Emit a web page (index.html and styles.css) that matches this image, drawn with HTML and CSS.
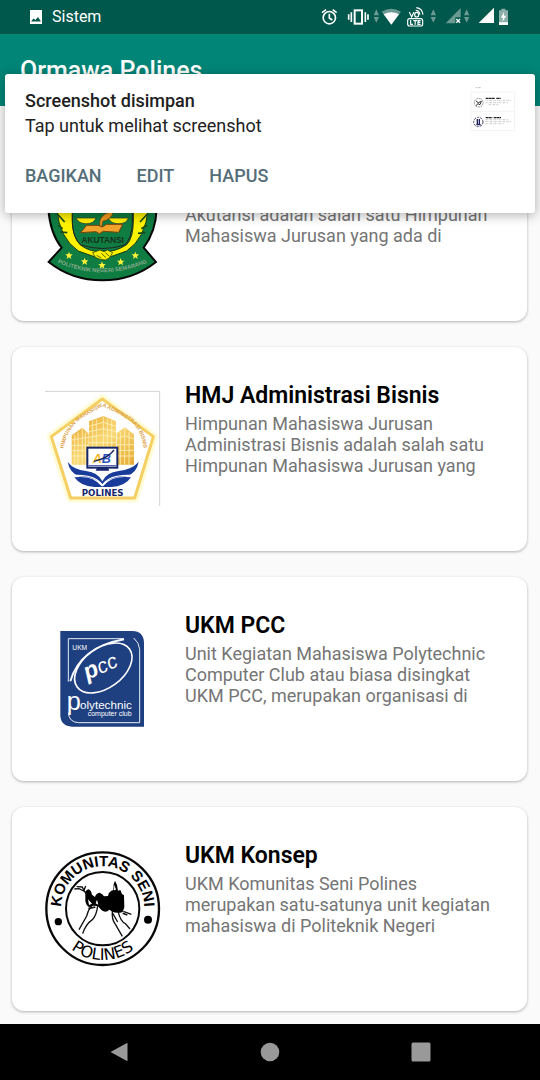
FILE: index.html
```html
<!DOCTYPE html>
<html lang="id">
<head>
<meta charset="utf-8">
<meta name="viewport" content="width=device-width, initial-scale=1">
<title>Ormawa Polines</title>
<link rel="stylesheet" href="styles.css">
</head>
<body>
<div class="screen">
  <div class="status-bar">
    <svg class="status-photo" viewBox="0 0 12 14" aria-hidden="true">
      <path fill="#fff" d="M0 0h12v14H0zM1 11.500h10L8 7 5.500 10 3.500 8.500z" fill-rule="evenodd"/>
    </svg>
    <span class="status-label">Sistem</span>
    <svg class="status-icons" viewBox="60 0 570 102" aria-hidden="true">
      <g fill="none" stroke="#fff" stroke-width="5">
        <circle cx="88" cy="53" r="18.500"/>
        <path d="M88 41v13l9 6M66 38l12-9M110 38l-12-9"/>
        <rect x="164" y="31" width="22" height="40" stroke-width="6"/>
        <path d="M154 37v29M196 37v29M146 43v16M204 43v16" stroke-width="5"/>
      </g>
      <g fill="#6a9a92">
        <path d="M221 46l8-18 8 18zM221 51l8 17 8-17z"/>
        <path d="M392 46l8-18 8 18zM392 51l8 17 8-17z"/>
        <path d="M492 46l8-18 8 18zM492 51l8 17 8-17z"/>
        <path d="M245 35q29-17 58 0l-29 38z"/>
        <path d="M437 70l45-46v28h-16v18z"/>
      </g>
      <path fill="#fff" d="M251 43q23-12 46 0l-23 31z"/>
      <g fill="none" stroke="#fff" stroke-width="3.500">
        <path d="M328 36l7 15 7-15"/>
        <ellipse cx="350" cy="44" rx="6" ry="7"/>
        <path d="M347 31q11 0 13 13M349 23q18 2 20 21"/>
        <rect x="323" y="56" width="45" height="22" rx="6"/>
        <path d="M332 60v13h7M340 62h11M345.500 62v12M362 62h-8v11h8M354 67h7"/>
        <path d="M469 57l11 11M480 57l-11 11" stroke-width="4"/>
      </g>
      <path fill="#fff" d="M536 69l46-46v46z"/>
      <path fill="#8db0aa" d="M604 26h12v5h8v44h-27V31h7z"/>
      <path fill="#fff" d="M597 67h27v8h-27zM612 36l-9 17h6l-2 12 12-18h-7z"/>
    </svg>
  </div>

  <header class="app-bar"><h1 class="app-title">Ormawa Polines</h1></header>

  <main class="list">
    <article class="card">
      <svg class="logo" viewBox="135 -117 345 345" role="img" aria-label="Logo HMJ Akuntansi">
        <defs><path id="arc-akt" d="M172 188Q306 246 442 188"/></defs>
        <path d="M307-103Q225-60 145-60V25Q150 100 185 143L146 186Q215 241 307 241T468 186L431 143Q468 95 470 25V-60Q385-60 307-103z" fill="#0f7d42" stroke="#080808" stroke-width="6"/>
        <path d="M170-40V25Q178 115 235 153Q270 166 307 178Q345 166 380 153Q437 115 445 25V-40H400V60Q400 115 380 134Q340 160 307 152Q275 160 240 134Q217 110 217 60V-40z" fill="#fff200" stroke="#153a15" stroke-width="3"/>
        <path d="M217 30V70Q220 118 244 135Q307 156 374 135Q395 115 397 70V30z" fill="#0f7d42" stroke="#222" stroke-width="3"/>
        <path d="M172 42l22 24M174 76l14 10M180 96l22 2M442 42l-22 24M441 76l-17 10M436 98l-22 2" stroke="#174b1c" stroke-width="5" fill="none"/>
        <path d="M228 54h60q-6 17-29 17t-31-17zM325 54h60q-4 17-29 17t-31-17z" fill="#fff200" stroke="#333" stroke-width="2"/>
        <path d="M242 98l18-22h34l12 5 14-8h48l-12 24-46-3-12 7-10-6z" fill="#f2a32c" stroke="#79420b" stroke-width="3"/>
        <path d="M300 78q-5-27 21-39l18-3q-2 20-31 28l-3 16z" fill="#f39b20" stroke="#79420b" stroke-width="2"/>
        <text x="308" y="130" class="akt-name">AKUTANSI</text>
        <path d="M278 158l22-8 12 5 10-5 16 8-10 16-12 6-16-2-14-6zM290 166l14 8M304 160l14 13M316 158l12 11" fill="#fff200" stroke="#36500d" stroke-width="2.500"/>
        <g fill="#fff23a">
          <path id="star" d="M207 155l3 8h8l-6 6 2 8-7-5-7 5 2-8-6-6h8z"/>
          <use href="#star" x="47" y="18"/><use href="#star" x="99" y="29"/><use href="#star" x="155" y="19"/><use href="#star" x="199"/>
        </g>
        <text class="akt-ribbon"><textPath href="#arc-akt" startOffset="50%">POLITEKNIK NEGERI SEMARANG</textPath></text>
      </svg>
      <div class="card-body card-body-scrolled">
        <p class="card-text">Akutansi adalah salah satu Himpunan Mahasiswa Jurusan yang ada di</p>
      </div>
    </article>

    <article class="card">
      <svg class="logo" viewBox="30 33 345 345" role="img" aria-label="Logo HMJ Administrasi Bisnis">
        <defs>
          <path id="ab-path" d="M85 214Q90 158 133 120Q168 96 202 80Q248 96 290 127Q323 158 327 214"/>
          <linearGradient id="gold" x2="1" y2="1"><stop stop-color="#e9a52e"/><stop offset=".5" stop-color="#f8d976"/><stop offset="1" stop-color="#e6aa33"/></linearGradient>
        </defs>
        <path d="M30 34h344v344" fill="none" stroke="#d2d2d2" stroke-width="3"/>
        <path d="M202 57L355 170 299 354H107L49 170z" fill="#fff" stroke="#fffbd5" stroke-width="26" stroke-linejoin="round"/>
        <path d="M202 57L355 170 299 354H107L49 170z" fill="#fff" stroke="#f5cf62" stroke-width="9" stroke-linejoin="round"/>
        <text class="ab-ring"><textPath href="#ab-path" startOffset="50%">HIMPUNAN MAHASISWA ADMINISTRASI BISNIS</textPath></text>
        <g fill="url(#gold)">
          <path d="M110 166l32-23 19 18v93h-51zM162 124l43-16 38 16v80h-81zM245 160l24-18 28 21v91h-52z"/>
        </g>
        <path d="M119 164v90M129 158v96M142 145v109M151 158v96M173 122v80M184 118v84M205 109v93M217 116v86M230 121v81M256 155v99M269 144v110M282 155v99M110 180l51-8M110 196h51M110 212h51M110 228h51M162 139l43-12 38 12M162 155l43-9 38 9M162 172l43-7 38 7M162 188h81M245 177l24-10 28 10M245 194h52M245 211h52M245 228h52" fill="none" stroke="#fff1b8" stroke-width="2.500"/>
        <path d="M98 246Q117 270 153 273Q190 277 202 304Q214 277 251 273Q288 270 311 246Q305 280 274 289Q226 290 202 313Q178 290 132 289Q104 278 98 246zM118 292Q174 285 200 319L204 319Q230 285 288 292Q270 320 228 321H178Q137 319 118 292z" fill="#193c9b"/>
        <path d="M121 286Q181 284 202 315Q223 284 284 286" fill="none" stroke="#fff" stroke-width="4"/>
        <rect x="157" y="203" width="90" height="60" fill="#fff" stroke="#16276b" stroke-width="6"/>
        <path d="M186 263h33l4 9h-41z" fill="#16276b"/>
        <path d="M160 257h84" stroke="#5b68ad" stroke-width="4"/>
        <text x="173" y="248" class="ab-a">A<tspan class="ab-b">B</tspan></text>
        <path d="M177 244Q219 235 237 210" fill="none" stroke="#182967" stroke-width="4"/>
        <text x="203" y="347" class="ab-name">POLINES</text>
      </svg>
      <div class="card-body">
        <h2 class="card-title">HMJ Administrasi Bisnis</h2>
        <p class="card-text">Himpunan Mahasiswa Jurusan Administrasi Bisnis adalah salah satu Himpunan Mahasiswa Jurusan yang</p>
      </div>
    </article>

    <article class="card">
      <svg class="logo" viewBox="-15 3 345 345" role="img" aria-label="Logo UKM PCC">
        <path d="M31 33H247Q281 34 282 68V320H66Q32 319 31 286z" fill="#1e3f80"/>
        <path d="M222 56H55V185M55 278Q57 307 86 308H269V88Q268 68 251 54" fill="none" stroke="#e7edf7" stroke-width="3"/>
        <path d="M61 184Q91 82 222 58" fill="none" stroke="#f5f8fc" stroke-width="6"/>
        <ellipse cx="160" cy="144" rx="97" ry="60" transform="rotate(-36 160 144)" fill="#1e3f80" stroke="#fff" stroke-width="5"/>
        <text x="67" y="91" class="pcc-ukm">UKM</text>
        <text x="112" y="180" class="pcc-p" transform="rotate(-24 112 180)">p<tspan class="pcc-cc">cc</tspan></text>
        <text x="50" y="270" class="pcc-big">p</text>
        <text x="90" y="266" class="pcc-word">olytechnic</text>
        <text x="113" y="287" class="pcc-sub">computer club</text>
      </svg>
      <div class="card-body">
        <h2 class="card-title">UKM PCC</h2>
        <p class="card-text">Unit Kegiatan Mahasiswa Polytechnic Computer Club atau biasa disingkat UKM PCC, merupakan organisasi di</p>
      </div>
    </article>

    <article class="card">
      <svg class="logo" viewBox="30 33 345 345" role="img" aria-label="Logo UKM Konsep">
        <defs>
          <path id="ks-top" d="M80 226A125 125 0 1 1 326 226"/>
          <path id="ks-bottom" d="M49 206A154 154 0 0 0 357 206"/>
        </defs>
        <circle cx="203" cy="206" r="169" fill="#fff" stroke="#080808" stroke-width="7"/>
        <circle cx="203" cy="206" r="110" fill="none" stroke="#080808" stroke-width="6"/>
        <circle cx="70" cy="245" r="11"/><circle cx="339" cy="239" r="12"/>
        <text class="ks-top"><textPath href="#ks-top" startOffset="50%">KOMUNITAS SENI</textPath></text>
        <text class="ks-bottom"><textPath href="#ks-bottom" startOffset="50%">POLINES</textPath></text>
        <g transform="translate(87 90)">
          <path fill-rule="evenodd" d="M64 70Q65 60 74 58Q81 61 84 74L93 81Q96 69 107 68Q116 71 120 79L132 78Q133 67 142 62L148 60 149 43 153 32 159 45 162 62 169 60 174 72 180 76 181 112 176 126Q158 132 143 124L136 119Q126 130 113 121L101 108 88 107 76 112Q64 105 64 91zM72 88l3 17 9-4zM99 89l-4 11 8 4z"/>
          <path d="M151 44l-1 17 6-2z" fill="#fff"/>
          <path d="M67 73L54 50M65 66L45 56 31 57M55 51L38 50M60 61l5-13M83 107q-12 16-15 31l-23 41M101 107q-3 29-16 42-20 14-29 42M145 123q-2 25 8 38l22 38M145 128l16 28M162 124q8 31 22 37l14 16M178 124l24 9" fill="none" stroke="#111" stroke-width="4"/>
          <path d="M73 116l21-5M176 130l14 5" stroke="#111" stroke-width="5"/>
        </g>
      </svg>
      <div class="card-body">
        <h2 class="card-title">UKM Konsep</h2>
        <p class="card-text">UKM Komunitas Seni Polines merupakan satu-satunya unit kegiatan mahasiswa di Politeknik Negeri</p>
      </div>
    </article>
  </main>

  <nav class="nav-bar" aria-label="Navigasi sistem">
    <button class="nav-button" aria-label="Kembali"><svg class="nav-icon" viewBox="0 0 20 20"><path d="M1.500 10L18 1q.500 0 .500.500v17q0 .500-.500.500z"/></svg></button>
    <button class="nav-button" aria-label="Beranda"><svg class="nav-icon" viewBox="0 0 20 20"><circle cx="10" cy="10" r="9.300"/></svg></button>
    <button class="nav-button" aria-label="Aplikasi terbaru"><svg class="nav-icon" viewBox="0 0 20 20"><rect x=".5" y=".5" width="19" height="19" rx="1.500"/></svg></button>
  </nav>

  <section class="notice" aria-label="Notifikasi">
    <div class="notice-head">
      <div class="notice-message">
        <strong class="notice-title">Screenshot disimpan</strong>
        <span>Tap untuk melihat screenshot</span>
      </div>
      <svg class="notice-thumb" viewBox="90 66 132 129" aria-hidden="true">
        <path d="M90 78h131v116H90zM90 136h131" fill="#fff" stroke="#f3f3f3" stroke-width="3"/>
        <path d="M104 65h5M112 65h7" stroke="#999" stroke-width="2"/>
        <circle cx="113" cy="110" r="13" fill="none" stroke="#777" stroke-width="3" stroke-dasharray="3 2"/>
        <path d="M105 105l7 5 9-4-4 10-7-3-4 6" fill="none" stroke="#333" stroke-width="3"/>
        <circle cx="112" cy="168" r="14" fill="none" stroke="#454568" stroke-width="3" stroke-dasharray="7 3"/>
        <path d="M109 159v17M115 159v17M106 176h13" stroke="#20205a" stroke-width="4"/>
        <path d="M134 97h28M166 97h13M134 155h20M158 155h22" stroke="#222" stroke-width="4" stroke-dasharray="8 1"/>
        <path d="M134 103h78M134 110h67M143 116h30M134 161h68M134 167h76M134 173h54" stroke="#aaa" stroke-width="2" stroke-dasharray="6 3 2 2"/>
      </svg>
    </div>
    <div class="notice-actions">
      <button class="notice-button">BAGIKAN</button>
      <button class="notice-button">EDIT</button>
      <button class="notice-button">HAPUS</button>
    </div>
  </section>
</div>
</body>
</html>
```
FILE: styles.css
```css
* { box-sizing: border-box; }
body { margin: 0; background: #fafafa; color: #000; font-family: Roboto, "Noto Sans", sans-serif; }
h1, h2, p { margin: 0; }
button { padding: 0; border: 0; background: none; font: inherit; cursor: pointer; }
.screen { position: relative; display: flex; flex-direction: column; min-height: 100vh; }

.status-bar { display: flex; align-items: center; height: 34px; padding: 0 30px; background: #00574b; color: #fff; }
.status-photo { width: 12px; height: 14px; }
.status-label { margin-left: 10px; font-size: 16px; line-height: 22px; }
.status-icons { width: 190px; height: 34px; margin-left: auto; }

.app-bar { display: flex; align-items: center; height: 72px; padding: 2px 20px 0; background: #008577; color: #fff; }
.app-title { font-size: 25px; font-weight: 500; line-height: 32px; }

.list { display: flex; flex: 1; flex-direction: column; gap: 26px; padding: 11px 13px 13px 12px; }
.card { display: flex; align-items: flex-start; gap: 25px; min-height: 204px; padding: 34px 30px 34px 33px; border-radius: 12px; background: #fff; box-shadow: 0 1px 3px rgba(0, 0, 0, .3); }
.logo { flex: none; width: 115px; height: 115px; margin-top: 10px; overflow: visible; }
.card-body { flex: 1; min-width: 0; }
.card-body-scrolled { padding-top: 53px; }
.card-title { margin-bottom: 2px; font-size: 23px; font-weight: 600; line-height: 30px; }
.card-text { color: #757575; font-size: 18px; line-height: 21px; }

.nav-bar { display: flex; height: 56px; padding: 0 44px; background: #000; }
.nav-button { display: flex; flex: 1; align-items: center; justify-content: center; }
.nav-icon { width: 20px; height: 20px; fill: #999; }

.notice { position: absolute; top: 74px; right: 5px; left: 5px; padding: 14px 20px 19px; border-radius: 3px; background: #fff; box-shadow: 0 2px 12px rgba(0, 0, 0, .32); }
.notice-head { display: flex; justify-content: space-between; }
.notice-message { display: flex; flex-direction: column; color: #212121; font-size: 18px; line-height: 25px; }
.notice-title { font-weight: 500; }
.notice-thumb { width: 44px; height: 43px; overflow: visible; }
.notice-actions { display: flex; gap: 35px; margin-top: 20px; }
.notice-button { color: #546e7a; font-size: 18px; font-weight: 500; line-height: 36px; }

.akt-name { font: bold 25px "Liberation Sans", sans-serif; text-anchor: middle; fill: #17301c; }
.akt-ribbon { font: bold 17px "Liberation Sans", sans-serif; text-anchor: middle; fill: #86a98b; }
.ab-ring { font: bold 16px "Liberation Sans", sans-serif; text-anchor: middle; fill: #dba34c; }
.ab-a, .ab-b { font: italic bold 38px "Liberation Sans", sans-serif; fill: #f3b51f; }
.ab-b { fill: #2d57bd; }
.ab-name { font: bold 26px "DejaVu Sans", sans-serif; text-anchor: middle; fill: #17276d; }
.pcc-ukm, .pcc-p, .pcc-cc, .pcc-big, .pcc-word, .pcc-sub { font-family: "Liberation Sans", sans-serif; fill: #fff; }
.pcc-ukm { font-size: 20px; }
.pcc-p { font-size: 70px; font-style: italic; font-weight: bold; }
.pcc-cc { font-size: 62px; font-weight: normal; }
.pcc-big { font-size: 76px; }
.pcc-word { font-size: 35px; }
.pcc-sub { font-size: 21px; }
.ks-top { font: bold 45px "Liberation Sans", sans-serif; text-anchor: middle; }
.ks-bottom { font: 48px "DejaVu Sans", sans-serif; text-anchor: middle; }
```
